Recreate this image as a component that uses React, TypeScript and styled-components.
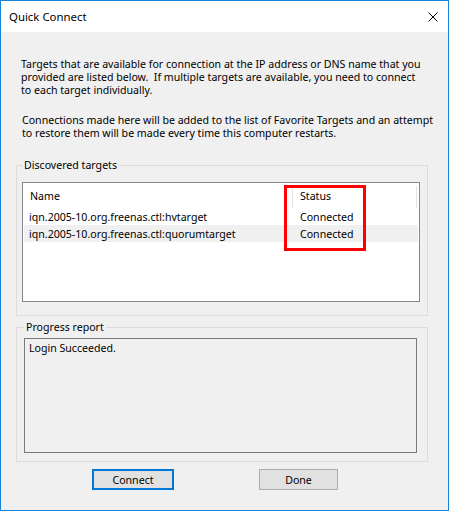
import styled, { createGlobalStyle } from "styled-components"

const GlobalStyle = createGlobalStyle`
  html, body {
    margin: 0;
    padding: 0;
    background: #ffffff;
  }
  body {
    font-family: "Noto Sans", "Liberation Sans", sans-serif;
    font-size: 10.6px;
    color: #000000;
  }
`

const Window = styled.div`
  box-sizing: border-box;
  width: 449px;
  height: 511px;
  border: 1px solid #1883d7;
  display: flex;
  flex-direction: column;
  background: #f0f0f0;
`

const TitleBar = styled.div`
  height: 31px;
  flex: none;
  background: #ffffff;
  display: flex;
  align-items: center;
  justify-content: space-between;
  padding: 0 10px 0 8px;
  font-size: 11.4px;
`

const CloseButton = styled.div`
  width: 10px;
  height: 10px;
  display: flex;
  svg {
    display: block;
  }
`

const Body = styled.div`
  flex: 1;
  padding: 26px 20px 0 15px;
  display: flex;
  flex-direction: column;
`

const Para = styled.p<{ $indent: number }>`
  margin: 0 0 17px;
  padding-left: ${(p) => p.$indent}px;
  line-height: 13px;
  white-space: nowrap;
`

const Group = styled.fieldset<{ $top: number; $pad: string }>`
  margin: ${(p) => p.$top}px 0 0;
  padding: ${(p) => p.$pad};
  border: 1px solid #dcdcdc;
  min-width: 0;
`

const Legend = styled.legend`
  padding: 0 2px;
  margin-left: 0;
  line-height: 13px;
`

const ListView = styled.div`
  position: relative;
  height: 118px;
  border: 1px solid #828790;
  background: #ffffff;
`

const HeaderRow = styled.div`
  display: grid;
  grid-template-columns: 270px 124px;
  height: 25px;
`

const HeaderCell = styled.div<{ $sep: boolean }>`
  display: flex;
  align-items: center;
  padding: 1px 0 0 7px;
  position: relative;
  &::after {
    content: "";
    display: ${(p) => (p.$sep ? "block" : "none")};
    position: absolute;
    right: 0;
    top: 3px;
    bottom: 0;
    width: 1px;
    background: #e5e5e5;
  }
`

const Row = styled.div<{ $selected?: boolean }>`
  display: grid;
  grid-template-columns: 270px 124px;
  height: 17px;
  margin: 0 1px;
  background: ${(p) => (p.$selected ? "#f0f0f0" : "transparent")};
`

const Cell = styled.div<{ $pad: number }>`
  display: flex;
  align-items: center;
  padding-left: ${(p) => p.$pad}px;
  white-space: nowrap;
`

const Highlight = styled.div`
  position: absolute;
  left: 261px;
  top: 2px;
  width: 76px;
  height: 60px;
  border: 3px solid #ff0000;
  pointer-events: none;
`

const ReportBox = styled.div`
  height: 107px;
  border: 1px solid #7a7a7a;
  background: #f0f0f0;
  padding: 3px 4px;
  line-height: 13px;
`

const ButtonRow = styled.div`
  display: flex;
  gap: 85px;
  padding: 7px 0 0 76px;
`

const Button = styled.button<{ $default?: boolean; $w: number }>`
  box-sizing: border-box;
  width: ${(p) => p.$w}px;
  height: 21px;
  font-family: inherit;
  font-size: inherit;
  color: #000000;
  background: #e1e1e1;
  border: ${(p) => (p.$default ? "2px solid #0078d7" : "1px solid #adadad")};
  padding: 0;
  margin: 0;
`

const targets = [
  { name: "iqn.2005-10.org.freenas.ctl:hvtarget", status: "Connected" },
  { name: "iqn.2005-10.org.freenas.ctl:quorumtarget", status: "Connected" },
]

export default function App() {
  return (
    <>
      <GlobalStyle />
      <Window>
        <TitleBar>
          <span>Quick Connect</span>
          <CloseButton>
            <svg width="10" height="10" viewBox="0 0 10 10">
              <path d="M0.5 0.5 L9.5 9.5 M9.5 0.5 L0.5 9.5" stroke="#000" strokeWidth="1" fill="none" />
            </svg>
          </CloseButton>
        </TitleBar>
        <Body>
          <Para $indent={5}>
            Targets that are available for connection at the IP address or DNS name that you
            <br />
            provided are listed below.&nbsp; If multiple targets are available, you need to connect
            <br />
            to each target individually.
          </Para>
          <Para $indent={6}>
            Connections made here will be added to the list of Favorite Targets and an attempt
            <br />
            to restore them will be made every time this computer restarts.
          </Para>
          <Group $top={2} $pad="10px 7px 13px 5px">
            <Legend>Discovered targets</Legend>
            <ListView>
              <HeaderRow>
                <HeaderCell $sep>Name</HeaderCell>
                <HeaderCell $sep>Status</HeaderCell>
              </HeaderRow>
              {targets.map((t, i) => (
                <Row key={t.name} $selected={i === 1}>
                  <Cell $pad={5}>{t.name}</Cell>
                  <Cell $pad={6}>{t.status}</Cell>
                </Row>
              ))}
              <Highlight />
            </ListView>
          </Group>
          <Group $top={5} $pad="4px 10px 8px 7px">
            <Legend>Progress report</Legend>
            <ReportBox>Login Succeeded.</ReportBox>
          </Group>
          <ButtonRow>
            <Button $default $w={82}>Connect</Button>
            <Button $w={79}>Done</Button>
          </ButtonRow>
        </Body>
      </Window>
    </>
  )
}
